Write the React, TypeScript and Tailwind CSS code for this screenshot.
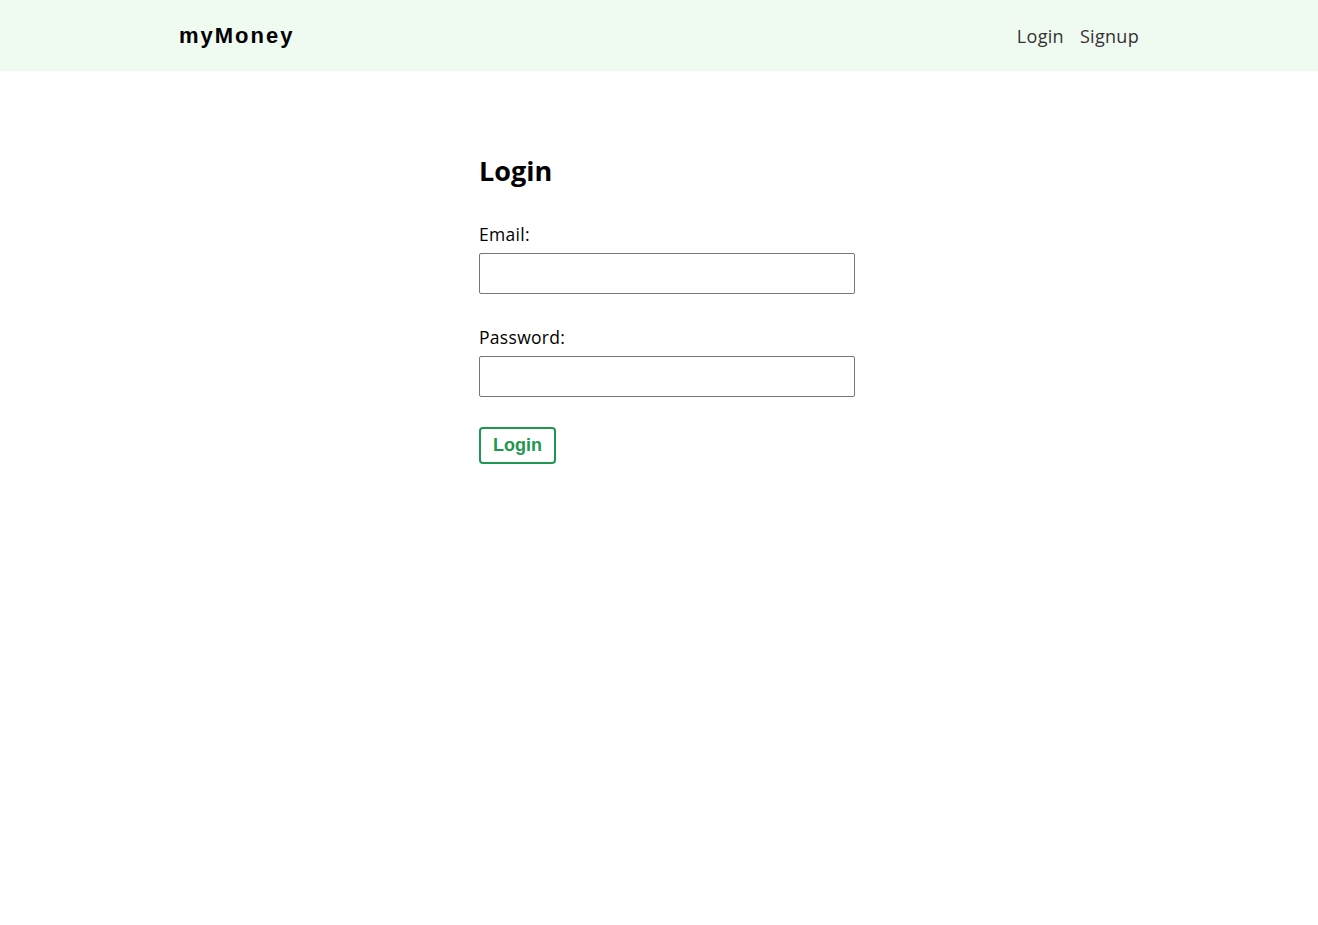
import React from 'react';

const App: React.FC = () => {
  return (
    <div className="min-h-screen bg-white font-['Open_Sans',sans-serif] text-black">
      <nav className="h-[71px] bg-[#effaf0]">
        <div className="mx-auto flex h-full max-w-[960px] items-center">
          <span className="font-['Liberation_Sans',Arial,sans-serif] text-[22px] font-bold tracking-[2px] text-black">
            myMoney
          </span>
          <div className="ml-auto flex items-center gap-[16px] pt-[2px] text-[18px] tracking-[0.3px] text-[#333]">
            <a href="#">Login</a>
            <a href="#">Signup</a>
          </div>
        </div>
      </nav>

      <form className="mx-auto mt-[80px] w-[360px]" onSubmit={e => e.preventDefault()}>
        <h2 className="text-[27px] font-bold leading-[40px]">Login</h2>
        <label className="mt-[31px] block">
          <span className="block text-[17.5px] leading-[24px] tracking-[0.3px]">Email:</span>
          <input
            type="email"
            className="mt-[7px] box-content block h-[23px] w-[358px] rounded-[2px] border border-[#767676] px-2 py-2"
          />
        </label>
        <label className="mt-[31px] block">
          <span className="block text-[17.5px] leading-[24px] tracking-[0.3px]">Password:</span>
          <input
            type="password"
            className="mt-[7px] box-content block h-[23px] w-[358px] rounded-[2px] border border-[#767676] px-2 py-2"
          />
        </label>
        <button className="mt-[30px] rounded-[4px] border-2 border-[#1f9751] px-[12px] py-[6px] font-['Liberation_Sans',Arial,sans-serif] text-[18px] font-bold leading-[21px] text-[#1f9751]">
          Login
        </button>
      </form>
    </div>
  );
};

export default App;
